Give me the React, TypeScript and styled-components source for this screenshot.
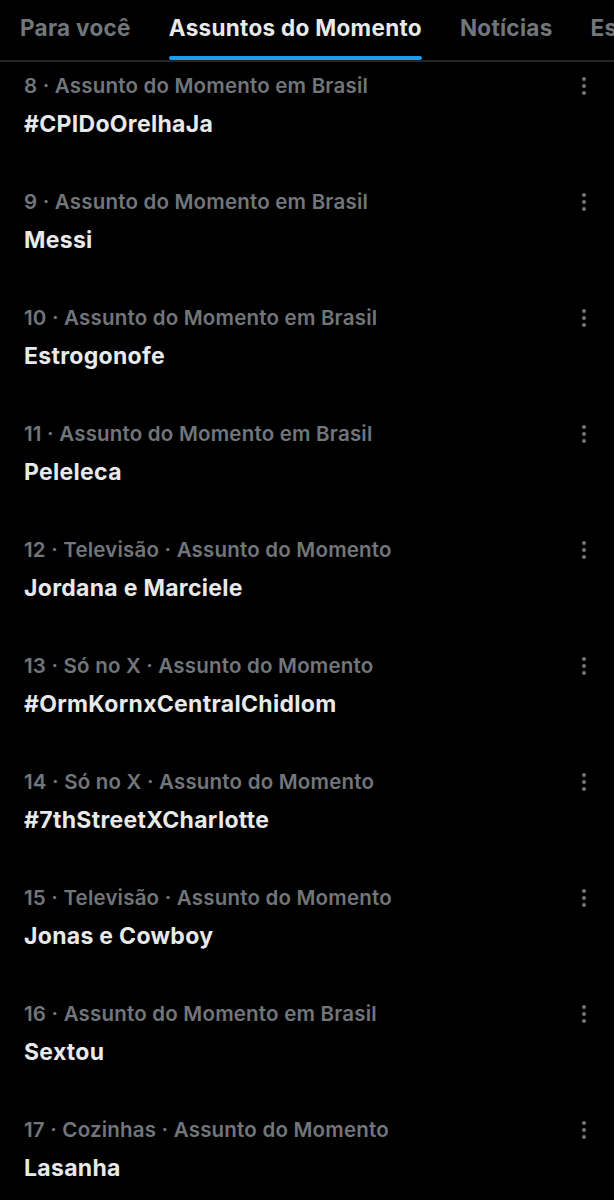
import React from "react";
import styled, { createGlobalStyle } from "styled-components";

const Global = createGlobalStyle`
  html, body { margin: 0; padding: 0; background: #000; }
  body { font-family: Inter, "Noto Sans", sans-serif; -webkit-font-smoothing: antialiased; }
`;

const Page = styled.div`
  width: 614px;
  min-height: 1200px;
  background: #000;
  overflow: hidden;
`;

const TabBar = styled.nav`
  display: flex;
  height: 60px;
  border-bottom: 2px solid #202327;
  padding-left: 20px;
  gap: 38px;
  white-space: nowrap;
  overflow: hidden;
`;

const Tab = styled.div<{ $active?: boolean }>`
  position: relative;
  flex-shrink: 0;
  display: flex;
  align-items: center;
  padding-bottom: 6px;
  font-size: 22.5px;
  font-weight: 700;
  color: ${(p) => (p.$active ? "#e7e9ea" : "#71767b")};
  letter-spacing: 0.3px;
  &::after {
    content: "";
    display: ${(p) => (p.$active ? "block" : "none")};
    position: absolute;
    left: 0;
    right: 0;
    bottom: 0;
    height: 4px;
    border-radius: 2px;
    background: #1d9bf0;
  }
`;

const List = styled.div`
  display: flex;
  flex-direction: column;
`;

const Row = styled.div`
  display: flex;
  align-items: flex-start;
  height: 116px;
  box-sizing: border-box;
  padding: 10px 20px 0 24px;
`;

const Texts = styled.div`
  flex: 1;
  display: flex;
  flex-direction: column;
  gap: 8px;
`;

const Meta = styled.div`
  font-size: 20.5px;
  line-height: 28px;
  font-weight: 600;
  color: #71767b;
  letter-spacing: 0.2px;
`;

const Title = styled.div`
  font-size: 23px;
  line-height: 32px;
  font-weight: 700;
  color: #e7e9ea;
  letter-spacing: 0.3px;
`;

const More = styled.div`
  width: 20px;
  display: flex;
  flex-direction: column;
  align-items: center;
  gap: 3px;
  padding-top: 5px;
  span {
    width: 4px;
    height: 4px;
    border-radius: 50%;
    background: #71767b;
  }
`;

const trends = [
  ["8 · Assunto do Momento em Brasil", "#CPIDoOrelhaJa"],
  ["9 · Assunto do Momento em Brasil", "Messi"],
  ["10 · Assunto do Momento em Brasil", "Estrogonofe"],
  ["11 · Assunto do Momento em Brasil", "Peleleca"],
  ["12 · Televisão · Assunto do Momento", "Jordana e Marciele"],
  ["13 · Só no X · Assunto do Momento", "#OrmKornxCentralChidlom"],
  ["14 · Só no X · Assunto do Momento", "#7thStreetXCharlotte"],
  ["15 · Televisão · Assunto do Momento", "Jonas e Cowboy"],
  ["16 · Assunto do Momento em Brasil", "Sextou"],
  ["17 · Cozinhas · Assunto do Momento", "Lasanha"],
];

export default function App() {
  return (
    <Page>
      <Global />
      <TabBar>
        <Tab>Para você</Tab>
        <Tab $active>Assuntos do Momento</Tab>
        <Tab>Notícias</Tab>
        <Tab>Es</Tab>
      </TabBar>
      <List>
        {trends.map(([meta, title]) => (
          <Row key={title}>
            <Texts>
              <Meta>{meta}</Meta>
              <Title>{title}</Title>
            </Texts>
            <More>
              <span />
              <span />
              <span />
            </More>
          </Row>
        ))}
      </List>
    </Page>
  );
}
